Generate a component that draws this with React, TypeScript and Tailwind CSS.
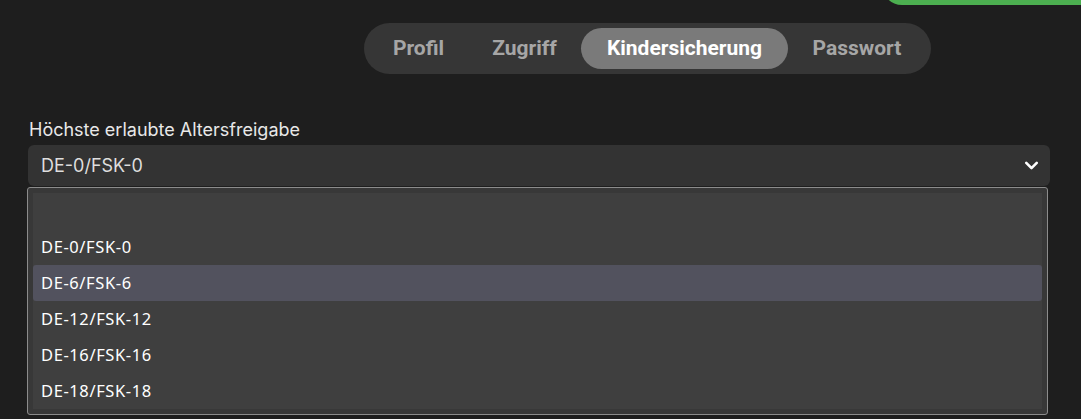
import React from 'react';
import { ChevronDown } from 'lucide-react';

const tabs = [
  { label: 'Profil', w: 'w-[99px]' },
  { label: 'Zugriff', w: 'w-[113px]' },
  { label: 'Kindersicherung', w: 'w-[207px]' },
  { label: 'Passwort', w: 'w-[138px]' },
];
const options = ['', 'DE-0/FSK-0', 'DE-6/FSK-6', 'DE-12/FSK-12', 'DE-16/FSK-16', 'DE-18/FSK-18'];

export default function App() {
  const active = 'Kindersicherung';
  const hovered = 'DE-6/FSK-6';

  return (
    <div className="relative h-[419px] w-full overflow-hidden bg-[#1e1e1e] font-['Inter',sans-serif]">
      {/* green status pill peeking from the top */}
      <div className="absolute left-[882px] right-[-30px] top-[-35px] h-[40px] rounded-[22px] bg-[#4caf50]"></div>

      {/* tab switcher */}
      <div className="flex pt-[23px] pl-[364px]">
        <div className="flex rounded-full bg-[#363636] p-[5px] font-['Roboto',sans-serif]">
          {tabs.map((t) => (
            <div
              key={t.label}
              className={
                t.label === active
                  ? `flex h-[41px] ${t.w} items-center justify-center rounded-full bg-[#7a7a7a] text-[21px] font-bold text-white`
                  : `flex h-[41px] ${t.w} items-center justify-center rounded-full text-[21px] font-bold text-[#a6a6a6]`
              }
            >
              {t.label}
            </div>
          ))}
        </div>
      </div>

      {/* age rating select */}
      <div className="ml-[28px] mt-[45px] w-[1022px]">
        <div className="mb-[4px] pl-px text-[18px] leading-[22px] text-[#e8e8e8]">Höchste erlaubte Altersfreigabe</div>
        <div className="flex h-[41px] items-center justify-between rounded-md bg-[#333333] pl-[13px] pr-[8px] text-[18px] text-[#dedede]">
          <span>DE-0/FSK-0</span>
          <ChevronDown className="h-[21px] w-[21px] text-white" strokeWidth={3} />
        </div>

        {/* open listbox */}
        <div className="mt-px w-[1021px] -translate-x-px rounded-[3px] border border-[#8c8c8c] bg-[#383838] p-[5px] font-['Noto_Sans',sans-serif] text-[16.5px] tracking-[0.6px] text-white">
          <div className="bg-[#3f3f3f]">
            {options.map((o, i) => (
              <div
                key={i}
                className={
                  o === hovered
                    ? 'flex h-[36px] items-center rounded-[3px] bg-[#52525e] pl-[8px]'
                    : 'flex h-[36px] items-center pl-[8px]'
                }
              >
                {o}
              </div>
            ))}
          </div>
        </div>
      </div>
    </div>
  );
}
